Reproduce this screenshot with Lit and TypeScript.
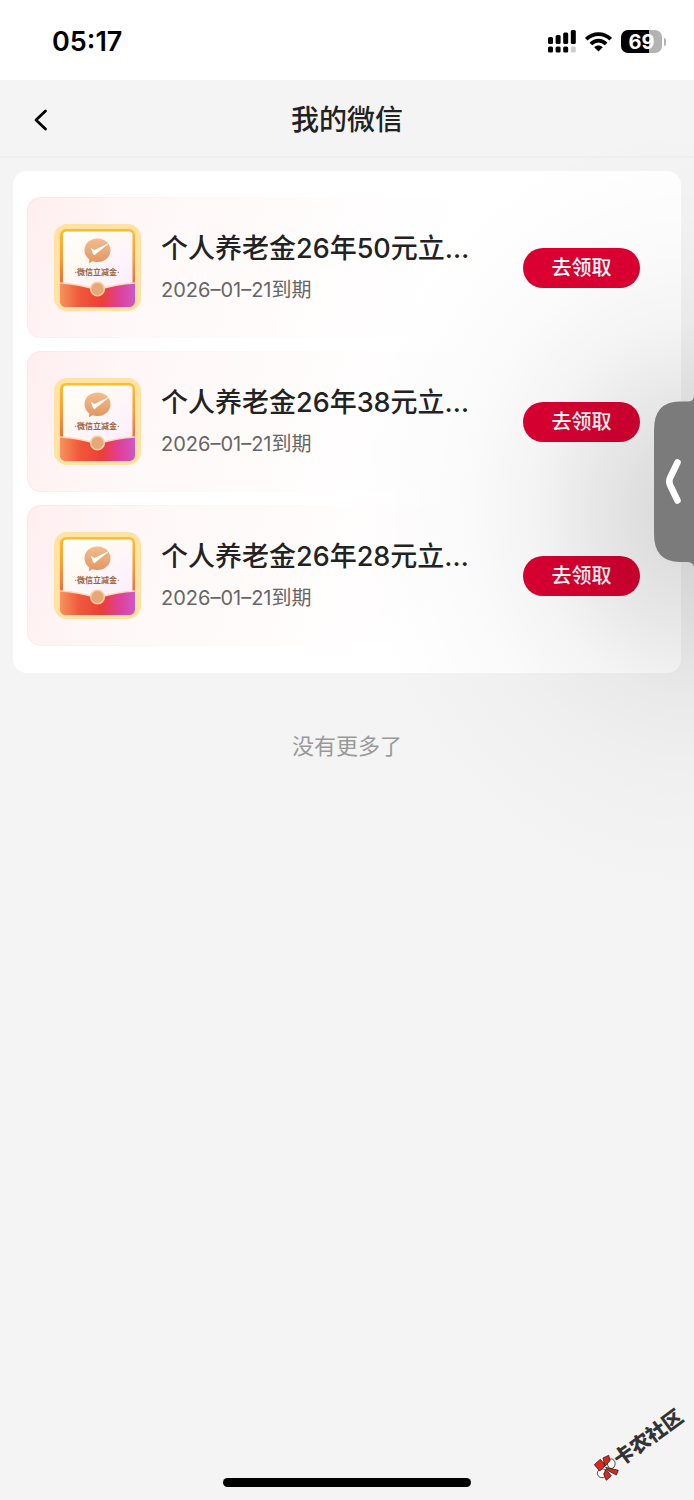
import { LitElement, html, css, svg } from "lit";
import { customElement, property, state } from "lit/decorators.js";

interface Coupon {
  title: string;
  expires: string;
}

const FONT = css`Inter, "Noto Sans CJK SC", sans-serif`;

@customElement("status-bar")
class StatusBar extends LitElement {
  static styles = css`
    :host {
      display: flex;
      align-items: center;
      justify-content: space-between;
      height: 80px;
      box-sizing: border-box;
      padding: 3px 28px 0 52px;
      background: #fff;
      color: #000;
      font-family: ${FONT};
    }
    .time {
      font-size: 27px;
      line-height: 32px;
      font-weight: 600;
    }
    .icons {
      display: flex;
      align-items: center;
      gap: 9px;
    }
    svg {
      display: block;
    }
    .battery {
      display: flex;
      align-items: center;
      gap: 2px;
    }
    .level {
      width: 41px;
      height: 23px;
      border-radius: 7px;
      background: linear-gradient(90deg, #000 69%, #b3b3b3 69%);
      color: #fff;
      font-size: 20px;
      line-height: 24px;
      font-weight: 700;
      text-align: center;
    }
    .cap {
      width: 2px;
      height: 8px;
      border-radius: 0 3px 3px 0;
      background: #b3b3b3;
    }
  `;

  render() {
    return html`
      <time class="time">05:17</time>
      <div class="icons">
        <svg width="28" height="23" viewBox="0 0 28 23" aria-label="信号">
          <rect x="0" y="7" width="5" height="7" rx="1.5" />
          <rect x="7.6" y="5" width="5" height="9" rx="1.5" />
          <rect x="15.2" y="2.5" width="5" height="11.5" rx="1.5" />
          <rect x="22.8" y="0" width="5" height="14" rx="1.5" />
          <rect x="0" y="16.5" width="5" height="6" rx="1.5" />
          <rect x="7.6" y="16.5" width="5" height="6" rx="1.5" />
          <rect x="15.2" y="16.5" width="5" height="6" rx="1.5" />
          <rect x="22.8" y="16.5" width="5" height="6" rx="1.5" fill="#ccc" />
        </svg>
        <svg width="27" height="20" viewBox="0 0 27 20" fill="none" stroke="#000" stroke-width="3.8" aria-label="无线网络">
          <path d="M1.3 7.2C8 .3 19 .3 25.7 7.2" />
          <path d="M5.9 12C10.3 7.6 16.7 7.6 21.1 12" />
          <path d="M9.2 15.2C11.6 12.9 15.4 12.9 17.8 15.2L13.5 19.6Z" fill="#000" stroke="none" />
        </svg>
        <div class="battery">
          <div class="level">69</div>
          <div class="cap"></div>
        </div>
      </div>
    `;
  }
}

@customElement("nav-bar")
class NavBar extends LitElement {
  @property() heading = "";

  static styles = css`
    :host {
      display: grid;
      grid-template-columns: 80px 1fr 80px;
      align-items: center;
      height: 78px;
      box-sizing: border-box;
      padding-top: 3px;
      border-bottom: 2px solid #f0f0f0;
      font-family: ${FONT};
    }
    .back {
      display: flex;
      align-items: center;
      justify-content: center;
      height: 73px;
      padding: 0;
      border: 0;
      background: none;
    }
    .heading {
      margin: 0;
      color: #222;
      font-size: 28px;
      line-height: 38px;
      font-weight: 500;
      text-align: center;
    }
  `;

  render() {
    return html`
      <button class="back" aria-label="返回">
        <svg width="16" height="24" viewBox="0 0 16 24" fill="none" stroke="#000" stroke-width="2.8" stroke-linecap="round" stroke-linejoin="round">
          <path d="M13.5 3L4 12L13.5 21" />
        </svg>
      </button>
      <h1 class="heading">${this.heading}</h1>
    `;
  }
}

@customElement("red-packet")
class RedPacket extends LitElement {
  static styles = css`
    :host {
      display: block;
      flex: none;
    }
    svg {
      display: block;
    }
    .caption {
      font-family: Inter, "Noto Sans CJK SC", sans-serif;
      font-size: 8px;
      font-weight: 700;
      fill: #9a6240;
    }
  `;

  render() {
    return html`
      <svg width="87" height="87" viewBox="0 0 87 87">
        <defs>
          <linearGradient id="frame" x1="0" y1="0" x2="0" y2="1">
            <stop offset="0" stop-color="#fbc02d" />
            <stop offset=".4" stop-color="#f79a35" />
            <stop offset=".8" stop-color="#ee5a35" />
          </linearGradient>
          <linearGradient id="sheet" x1="0" y1="0" x2="1" y2="1">
            <stop offset="0" stop-color="#fff" />
            <stop offset=".35" stop-color="#fffaf2" />
            <stop offset=".65" stop-color="#fdf4fc" />
            <stop offset="1" stop-color="#f8eefd" />
          </linearGradient>
          <linearGradient id="pocket" x1="0" y1="0" x2="1" y2="0">
            <stop offset="0" stop-color="#f7935c" />
            <stop offset=".25" stop-color="#f05a3c" />
            <stop offset=".55" stop-color="#ee3e36" />
            <stop offset=".8" stop-color="#dc419a" />
            <stop offset="1" stop-color="#cf58c4" />
          </linearGradient>
          <linearGradient id="bronze" x1="0" y1="0" x2="0" y2="1">
            <stop offset="0" stop-color="#f2bd92" />
            <stop offset="1" stop-color="#e2955f" />
          </linearGradient>
        </defs>
        <rect x="0" y="0" width="87" height="87" rx="13" fill="#ffe2a4" />
        <rect x="6" y="5" width="75" height="78" rx="6" fill="url(#frame)" />
        <path d="M9 11a3.5 3.5 0 0 1 3.5-3.5H75a3.5 3.5 0 0 1 3.5 3.5V67H9Z" fill="url(#sheet)" />
        <path d="M6 59Q25 60 43.5 66Q62 60 81 59V77a6 6 0 0 1-6 6H12a6 6 0 0 1-6-6Z" fill="url(#pocket)" />
        <path d="M6 59Q25 60 43.5 66Q62 60 81 59" fill="none" stroke="#fbd9b5" stroke-width="1.6" />
        <circle cx="43.5" cy="65" r="6.8" fill="#e6a878" stroke="#f5d09c" stroke-width="1.6" />
        <path d="M43.5 14.5C51 14.5 56.5 19.6 56.5 26.2S51 38 43.5 38C41.5 38 40 37.7 38.5 37.2L34.8 39.2L35.4 35.4C32.3 33.3 30.5 30 30.5 26.2C30.5 19.6 36 14.5 43.5 14.5Z" fill="url(#bronze)" />
        <path d="M36.5 23.5L40.5 26L56 18.5L41 30.8Q39.8 31.4 39.2 30Z" fill="#fff" />
        ${svg`<text class="caption" x="43" y="51" text-anchor="middle">·微信立减金·</text>`}
      </svg>
    `;
  }
}

@customElement("coupon-item")
class CouponItem extends LitElement {
  @property({ attribute: false }) coupon!: Coupon;

  static styles = css`
    :host {
      display: flex;
      align-items: center;
      box-sizing: border-box;
      height: 141px;
      padding: 0 26px;
      border-radius: 14px;
      border: 1px solid transparent;
      background:
        linear-gradient(110deg, #ffeef0 0%, #fff7f7 16%, #fffafa 32%, #fffdfd 50%, #fff 65%) padding-box,
        linear-gradient(110deg, #fde4e7 0%, #fff2f3 20%, #fffafa 36%, #fff 60%) border-box;
      font-family: ${FONT};
    }
    .info {
      flex: 1;
      min-width: 0;
      padding: 0 20px;
    }
    .title {
      margin: 0;
      color: #222;
      font-size: 27px;
      line-height: 40px;
      font-weight: 500;
      white-space: nowrap;
      overflow: hidden;
      text-overflow: ellipsis;
    }
    .date {
      margin: 5px 0 0;
      color: #666;
      font-size: 20px;
      line-height: 32px;
    }
    .claim {
      flex: none;
      width: 117px;
      height: 40px;
      padding: 0;
      border: 0;
      border-radius: 20px;
      background: #dc0032;
      color: #fff;
      font-family: inherit;
      font-size: 20px;
      line-height: 40px;
      font-weight: 500;
    }
  `;

  render() {
    return html`
      <red-packet></red-packet>
      <div class="info">
        <h2 class="title">${this.coupon.title}</h2>
        <p class="date">${this.coupon.expires}到期</p>
      </div>
      <button class="claim">去领取</button>
    `;
  }
}

@customElement("app-root")
class AppRoot extends LitElement {
  @state() private coupons: Coupon[] = [50, 38, 28].map((amount) => ({
    title: `个人养老金26年${amount}元立…`,
    expires: "2026–01–21",
  }));

  static styles = css`
    :host {
      display: block;
      position: relative;
      box-sizing: border-box;
      min-height: 100vh;
      overflow: hidden;
      background: #f4f4f4;
      font-family: ${FONT};
    }
    .list {
      display: flex;
      flex-direction: column;
      gap: 13px;
      margin: 13px 13px 0;
      padding: 26px 14px 27px;
      border-radius: 14px;
      background: #fff;
    }
    .end {
      margin: 56px 0 0;
      color: #999;
      font-size: 22px;
      line-height: 34px;
      text-align: center;
    }
    .shade {
      position: absolute;
      top: 80px;
      right: 0;
      width: 400px;
      height: 820px;
      pointer-events: none;
      background: radial-gradient(
        ellipse 340px 390px at 100% 430px,
        rgba(0, 0, 0, 0.17) 0%,
        rgba(0, 0, 0, 0.125) 16%,
        rgba(0, 0, 0, 0.085) 32%,
        rgba(0, 0, 0, 0.045) 48%,
        rgba(0, 0, 0, 0.018) 66%,
        rgba(0, 0, 0, 0.006) 84%,
        rgba(0, 0, 0, 0) 100%
      );
    }
    .drawer {
      position: absolute;
      top: 396px;
      right: 0;
      padding: 0;
      border: 0;
      background: none;
    }
    .drawer svg,
    .mark svg {
      display: block;
    }
    .mark {
      position: absolute;
      right: 2px;
      bottom: 14px;
    }
    .mark text {
      font-family: "Noto Sans CJK SC", sans-serif;
      font-size: 20px;
      font-weight: 900;
      fill: #333;
    }
    .home {
      position: absolute;
      bottom: 13px;
      left: 50%;
      width: 248px;
      height: 9px;
      margin-left: -124px;
      border-radius: 5px;
      background: #000;
    }
  `;

  render() {
    return html`
      <status-bar></status-bar>
      <nav-bar heading="我的微信"></nav-bar>
      <main>
        <div class="list">
          ${this.coupons.map((c) => html`<coupon-item .coupon=${c}></coupon-item>`)}
        </div>
        <p class="end">没有更多了</p>
      </main>
      <div class="shade"></div>
      <button class="drawer" aria-label="展开侧栏">
        <svg width="40" height="172" viewBox="0 0 40 172">
          <path d="M40 1Q39 5.5 34 5.5H26Q0 5.5 0 34V138Q0 166 26 166H34Q39 166.5 40 171Z" fill="#7b7b7b" />
          <path d="M23.5 66.5L16 82Q14.5 85.5 16 89L23.5 104.5" fill="none" stroke="#fff" stroke-width="6.5" stroke-linecap="round" stroke-linejoin="round" />
        </svg>
      </button>
      <div class="mark">
        <svg width="100" height="88" viewBox="0 -8 100 88" overflow="visible">
          <g stroke="#222" stroke-width=".8">
            <ellipse cx="19.3" cy="57.7" rx="3.8" ry="4.8" fill="#fff" />
            <ellipse cx="10" cy="67.3" rx="4.6" ry="4.4" fill="#fff" />
            <path d="M2.3 58.7L8.3 53.3L13.7 59.3L7.7 65Z" fill="#e1251b" />
            <path d="M11 52L16.7 49.3L18 54.7L13 60.3Z" fill="#e1251b" />
            <path d="M13.7 61.3L26.3 64.3L24.3 69L16.7 65Z" fill="#e1251b" />
            <path d="M14 63L19.3 70L14.3 74.3L11.7 68Z" fill="#e1251b" />
          </g>
          ${svg`<text transform="translate(28 61) rotate(-36)">卡农社区</text>`}
        </svg>
      </div>
      <div class="home"></div>
    `;
  }
}
